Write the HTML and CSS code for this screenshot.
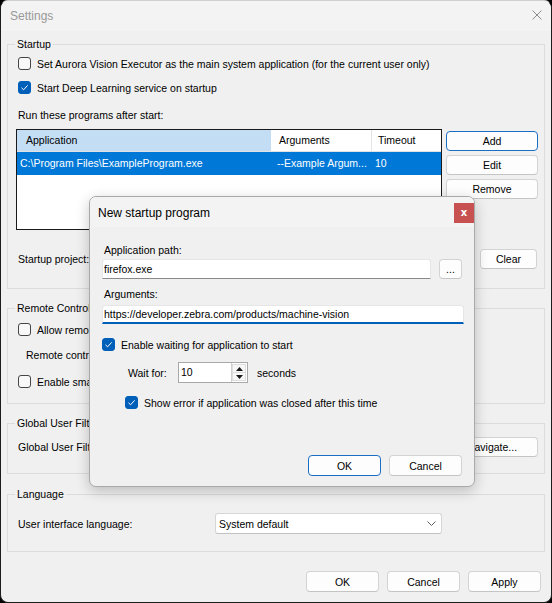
FILE: index.html
```html
<!DOCTYPE html>
<html>
<head>
<meta charset="utf-8">
<link rel="stylesheet" href="styles.css">
</head>
<body>
<div class="window">
  <div class="titlebar">
    <span class="title">Settings</span>
    <svg class="win-close" width="10" height="10" viewBox="0 0 10 10"><path d="M0.5 0.5 L9.5 9.5 M9.5 0.5 L0.5 9.5" stroke="#8c8c8c" stroke-width="1" fill="none"/></svg>
  </div>
  <div class="content">
    <fieldset class="group startup">
      <legend>Startup</legend>
      <label class="check r1"><span class="box"></span>Set Aurora Vision Executor as the main system application (for the current user only)</label>
      <label class="check r2"><span class="box on"><svg width="13" height="13" viewBox="0 0 13 13"><path d="M3.5 6.8 L5.6 8.8 L9.6 4.4" stroke="#fff" stroke-width="1" fill="none"/></svg></span>Start Deep Learning service on startup</label>
      <div class="caption">Run these programs after start:</div>
      <div class="listrow">
        <div class="listview">
          <div class="lv-header">
            <div class="hcell c1 hot">Application</div>
            <div class="hcell c2">Arguments</div>
            <div class="hcell c3">Timeout</div>
          </div>
          <div class="lv-row selected">
            <div class="cell c1">C:\Program Files\ExampleProgram.exe</div>
            <div class="cell c2">--Example Argum...</div>
            <div class="cell c3">10</div>
          </div>
        </div>
        <div class="btncol">
          <button class="btn default">Add</button>
          <button class="btn">Edit</button>
          <button class="btn">Remove</button>
        </div>
      </div>
      <div class="projrow">
        <span class="lbl">Startup project:</span>
        <button class="btn clear">Clear</button>
      </div>
    </fieldset>

    <fieldset class="group remote">
      <legend>Remote Control</legend>
      <label class="check rc1"><span class="box"></span>Allow remote control</label>
      <div class="rc-port">Remote control port:</div>
      <label class="check rc3"><span class="box"></span>Enable smart</label>
    </fieldset>

    <fieldset class="group global">
      <legend>Global User Filters</legend>
      <div class="globrow">
        <span class="lbl">Global User Filters:</span>
        <button class="btn nav">Navigate...</button>
      </div>
    </fieldset>

    <fieldset class="group language">
      <legend>Language</legend>
      <div class="langrow">
        <span class="lbl langlbl">User interface language:</span>
        <div class="combo"><span>System default</span><svg width="9" height="5" viewBox="0 0 9 5"><path d="M0.5 0.5 L4.5 4.5 L8.5 0.5" stroke="#5f5f5f" stroke-width="1" fill="none"/></svg></div>
      </div>
    </fieldset>

    <div class="footer">
      <button class="btn wide">OK</button>
      <button class="btn wide">Cancel</button>
      <button class="btn wide">Apply</button>
    </div>
  </div>

  <div class="dialog">
    <div class="dlg-title">
      <span class="dlg-caption">New startup program</span>
      <button class="dlg-close">x</button>
    </div>
    <div class="dlg-body">
      <div class="dlg-label first">Application path:</div>
      <div class="pathrow">
        <div class="field">firefox.exe</div>
        <button class="btn browse">...</button>
      </div>
      <div class="dlg-label args">Arguments:</div>
      <div class="field focused">https://developer.zebra.com/products/machine-vision</div>
      <label class="check d1"><span class="box on"><svg width="13" height="13" viewBox="0 0 13 13"><path d="M3.5 6.8 L5.6 8.8 L9.6 4.4" stroke="#fff" stroke-width="1" fill="none"/></svg></span>Enable waiting for application to start</label>
      <div class="spinrow">
        <span class="waitlbl">Wait for:</span>
        <div class="spin">
          <span class="spin-val">10</span>
          <div class="spin-btns">
            <div class="spin-up"><svg width="7" height="4" viewBox="0 0 7 4"><path d="M0 4 L3.5 0 L7 4 Z" fill="#1a1a1a"/></svg></div>
            <div class="spin-down"><svg width="7" height="4" viewBox="0 0 7 4"><path d="M0 0 L3.5 4 L7 0 Z" fill="#1a1a1a"/></svg></div>
          </div>
        </div>
        <span class="secs">seconds</span>
      </div>
      <label class="check d2"><span class="box on"><svg width="13" height="13" viewBox="0 0 13 13"><path d="M3.5 6.8 L5.6 8.8 L9.6 4.4" stroke="#fff" stroke-width="1" fill="none"/></svg></span>Show error if application was closed after this time</label>
      <div class="dlg-buttons">
        <button class="btn wide default">OK</button>
        <button class="btn wide">Cancel</button>
      </div>
    </div>
  </div>
</div>
</body>
</html>
```
FILE: styles.css
```css
* { box-sizing: border-box; }
html, body { margin: 0; padding: 0; background: #000; }
body {
  font-family: "Liberation Sans", Arial, sans-serif;
  font-size: 10.5px;
  color: #000;
}
.window {
  position: relative;
  width: 552px;
  height: 603px;
  background: #f0f0f0;
  border: 1px solid #1c1c1c;
  border-top-color: #cfcfcf;
  border-radius: 8px;
  overflow: hidden;
}
.titlebar {
  height: 30px;
  background: #f3f3f3;
  display: flex;
  align-items: flex-start;
  justify-content: space-between;
  padding: 0 9px 0 9px;
}
.title {
  font-size: 12px;
  line-height: 14px;
  margin-top: 8px;
  color: #999;
}
.win-close { margin-top: 9px; }
.content {
  display: flex;
  flex-direction: column;
  padding-top: 6px;
}
.group {
  margin: 12px 6px 0 6px;
  padding: 0;
  border: 1px solid #dcdcdc;
  min-width: 0;
}
.group legend {
  margin-left: 7px;
  padding: 0 2px;
  line-height: 14px;
  font-size: 10.5px;
}
.startup { margin-top: 0; padding-bottom: 19px; }
.check {
  display: flex;
  align-items: center;
  height: 17px;
  line-height: 14px;
  white-space: nowrap;
}
.box {
  width: 13px;
  height: 13px;
  border: 1px solid #454545;
  border-radius: 3px;
  background: #f8f8f8;
  margin-right: 6px;
  flex: none;
  display: block;
  position: relative;
}
.box.on {
  background: #005fb8;
  border-color: #005fb8;
}
.box.on svg { position: absolute; left: -1px; top: -1px; }
.r1 { margin: 4px 0 0 10px; }
.r2 { margin: 7px 0 0 10px; }
.caption { margin: 12px 0 0 10px; line-height: 14px; }
.listrow {
  display: flex;
  margin: 7px 6px 0 8px;
  gap: 4px;
}
.listview {
  width: 426px;
  height: 101px;
  border: 1px solid #1a1a1a;
  background: #fff;
  flex: none;
}
.lv-header {
  display: flex;
  height: 22px;
  border-bottom: 1px solid #e2e2e2;
}
.hcell {
  line-height: 21px;
  border-right: 1px solid #e5e5e5;
  white-space: nowrap;
}
.hcell.hot { background: #c2ddf4; border-right-color: #fff; }
.c1 { width: 255px; }
.c2 { width: 100px; }
.c3 { flex: 1; border-right: none; }
.hcell.c1 { padding-left: 9px; }
.hcell.c2 { padding-left: 7px; }
.hcell.c3 { padding-left: 6px; }
.lv-row { display: flex; height: 23px; line-height: 23px; }
.lv-row.selected { background: #0078d7; color: #fff; }
.cell { white-space: nowrap; overflow: hidden; }
.cell.c1 { padding-left: 3px; }
.cell.c2 { padding-left: 5px; }
.cell.c3 { padding-left: 3px; }
.btncol {
  display: flex;
  flex-direction: column;
  gap: 4px;
  padding-top: 2px;
  width: 92px;
}
.btn {
  font-family: inherit;
  font-size: 10.5px;
  color: #000;
  height: 20px;
  padding: 0;
  background: #fdfdfd;
  border: 1px solid #d3d3d3;
  border-bottom-color: #c4c4c4;
  border-radius: 4px;
  line-height: 18px;
}
.btn.default { border-color: #1a6fc4; }
.projrow {
  display: flex;
  justify-content: space-between;
  align-items: center;
  margin: 19px 7px 0 10px;
  height: 20px;
}
.lbl { line-height: 14px; white-space: nowrap; }
.clear { width: 57px; }
.remote { padding-bottom: 13px; }
.rc1 { margin: 6px 0 0 10px; }
.rc-port { margin: 10px 0 0 18px; line-height: 14px; }
.rc3 { margin: 11px 0 0 10px; }
.global { padding-bottom: 16px; margin-top: 12px; }
.globrow {
  display: flex;
  justify-content: space-between;
  align-items: center;
  margin: 7px 6px 0 10px;
  height: 20px;
}
.nav { width: 92px; }
.language { padding-bottom: 17px; margin-top: 13px; }
.langrow {
  display: flex;
  align-items: center;
  margin: 12px 0 0 10px;
  height: 21px;
}
.langlbl { width: 197px; }
.combo {
  width: 227px;
  height: 21px;
  background: #fff;
  border: 1px solid #d6d6d6;
  border-bottom-color: #c2c2c2;
  border-radius: 3px;
  display: flex;
  align-items: center;
  justify-content: space-between;
  padding: 0 5px 0 3px;
  line-height: 14px;
}
.footer {
  display: flex;
  justify-content: flex-end;
  gap: 8px;
  margin-top: 19px;
  padding-right: 10px;
}
.wide { width: 73px; height: 21px; }

/* dialog */
.dialog {
  position: absolute;
  left: 88px;
  top: 195px;
  width: 386px;
  background: #f0f0f0;
  border: 1px solid #a9a9a9;
  border-radius: 7px;
  box-shadow: 0 4px 14px rgba(0,0,0,0.22);
  overflow: hidden;
}
.dlg-title {
  height: 30px;
  background: #f3f3f3;
  display: flex;
  justify-content: space-between;
  align-items: flex-start;
  padding-left: 8px;
}
.dlg-caption { font-size: 12px; line-height: 14px; margin-top: 9px; }
.dlg-close {
  width: 20px;
  height: 20px;
  margin-top: 6px;
  background: #c75050;
  border: none;
  padding: 0;
  color: #fff;
  font-family: "DejaVu Sans", sans-serif;
  font-weight: bold;
  font-size: 10px;
  line-height: 18px;
}
.dlg-body {
  display: flex;
  flex-direction: column;
  padding: 0 10px 10px 12px;
}
.dlg-label { line-height: 14px; padding-left: 2px; }
.dlg-label.first { margin-top: 16px; }
.dlg-label.args { margin-top: 8px; }
.pathrow {
  display: flex;
  gap: 8px;
  margin-top: 2px;
  height: 20px;
}
.field {
  background: #fff;
  border: 1px solid #e6e6e6;
  border-bottom-color: #8a8a8a;
  border-radius: 3px 3px 0 0;
  height: 20px;
  line-height: 18px;
  padding-left: 1px;
  white-space: nowrap;
}
.pathrow .field { flex: 1; }
.browse { width: 23px; margin-right: 2px; line-height: 16px; }
.field.focused {
  margin-top: 4px;
  height: 19px;
  line-height: 16px;
  border-bottom: 2px solid #005fb8;
}
.d1 { margin-top: 12px; }
.spinrow {
  display: flex;
  align-items: center;
  margin-top: 9px;
  height: 21px;
  padding-left: 26px;
}
.waitlbl { width: 50px; line-height: 14px; }
.spin {
  width: 70px;
  height: 21px;
  background: #fff;
  border: 1px solid #a8a8a8;
  display: flex;
  justify-content: space-between;
}
.spin-val { line-height: 19px; padding-left: 2px; }
.spin-btns {
  width: 16px;
  display: flex;
  flex-direction: column;
  border-left: 1px solid #d0d0d0;
  padding: 1px 1px 1px 0;
}
.spin-up, .spin-down {
  flex: 1;
  display: flex;
  align-items: center;
  justify-content: center;
  background: #f7f7f7;
  border: 1px solid #dedede;
}
.spin-up { border-bottom: none; }
.secs { margin-left: 9px; line-height: 14px; }
.d2 { margin: 11px 0 0 23px; }
.dlg-buttons {
  display: flex;
  justify-content: flex-end;
  gap: 8px;
  margin-top: 44px;
  padding-right: 2px;
}
```
